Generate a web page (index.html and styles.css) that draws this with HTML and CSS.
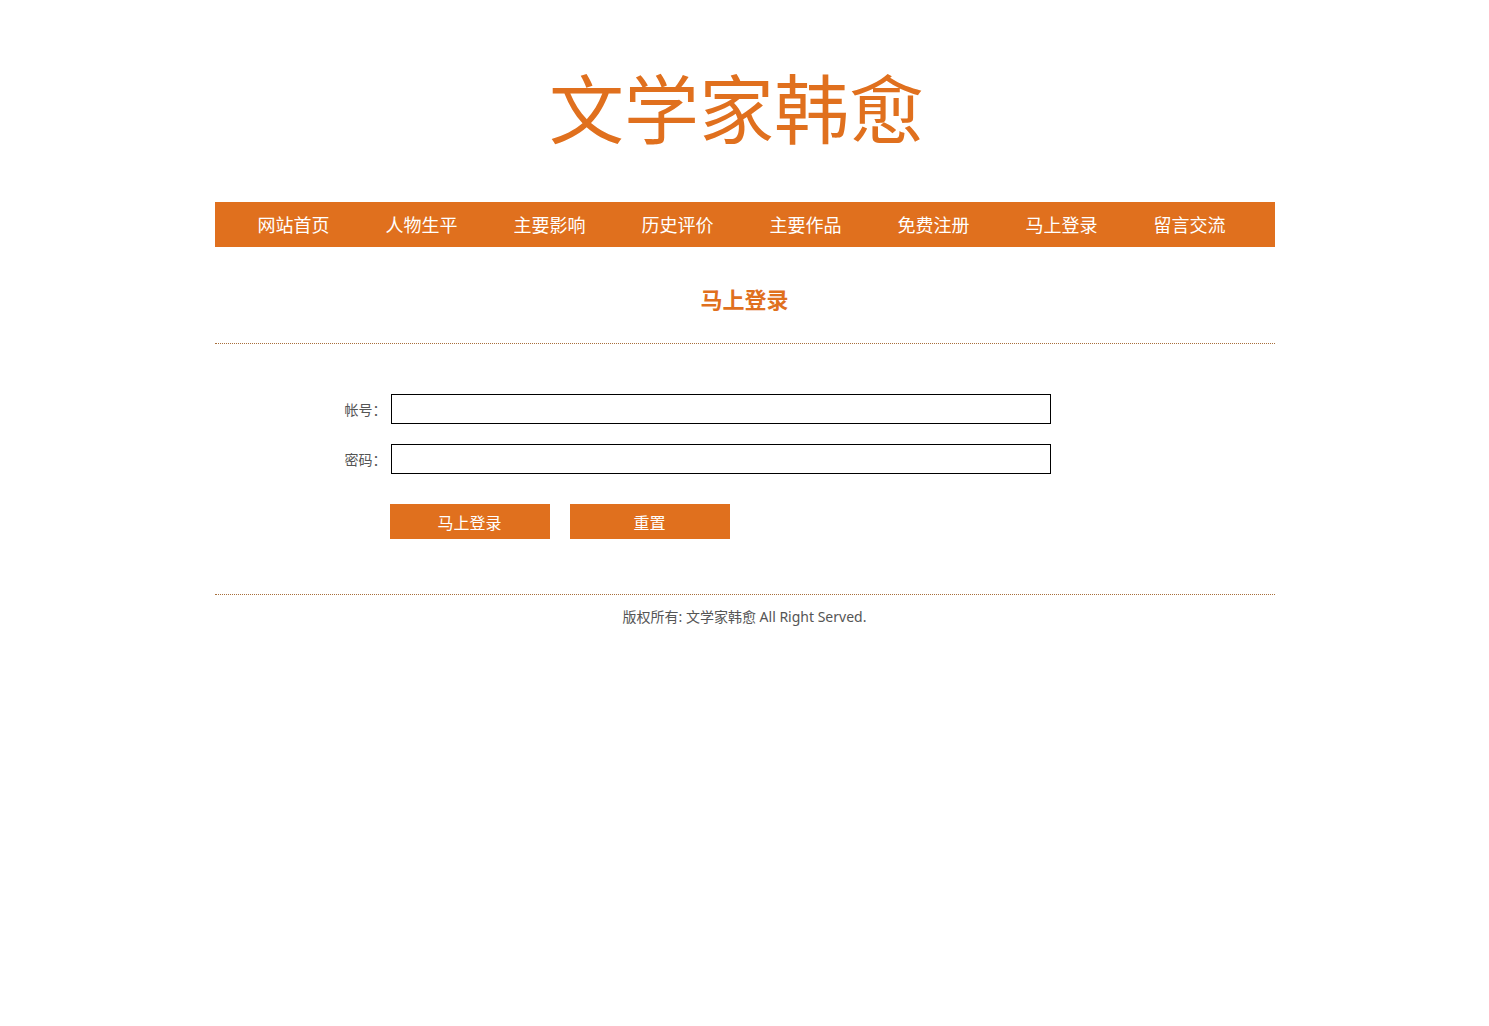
FILE: index.html
```html
<!DOCTYPE html>
<html lang="zh-CN">
<head>
<meta charset="utf-8">
<meta name="viewport" content="width=device-width, initial-scale=1">
<title>马上登录 - 文学家韩愈</title>
<link rel="stylesheet" href="styles.css">
</head>
<body>
<div class="page">
  <header class="banner">
    <p class="logo">文学家韩愈</p>
  </header>
  <nav class="menu">
    <a href="#">网站首页</a>
    <a href="#">人物生平</a>
    <a href="#">主要影响</a>
    <a href="#">历史评价</a>
    <a href="#">主要作品</a>
    <a href="#">免费注册</a>
    <a href="#">马上登录</a>
    <a href="#">留言交流</a>
  </nav>
  <main>
    <h1 class="title">马上登录</h1>
    <form class="login">
      <div class="row">
        <label for="account">帐号：</label>
        <input id="account" type="text">
      </div>
      <div class="row">
        <label for="password">密码：</label>
        <input id="password" type="password">
      </div>
      <div class="actions">
        <button type="submit">马上登录</button>
        <button type="reset">重置</button>
      </div>
    </form>
  </main>
  <footer class="footer">版权所有: 文学家韩愈 All Right Served.</footer>
</div>
</body>
</html>
```
FILE: styles.css
```css
* {
  box-sizing: border-box;
}

body {
  margin: 0;
  background: #fff;
  color: #555;
  font: 14px/20px "Microsoft YaHei", "Noto Sans CJK SC", sans-serif;
}

.page {
  max-width: 1060px;
  margin: 0 auto;
}

.banner {
  padding: 56px 16px 46px 0;
}

.logo {
  margin: 0;
  color: #e0701e;
  font-family: KaiTi, STKaiti, "Noto Sans CJK SC", serif;
  font-size: 75px;
  line-height: 100px;
  text-align: center;
}

.menu {
  display: flex;
  flex-wrap: wrap;
  padding-left: 15px;
  background: #e0701e;
}

.menu a {
  padding: 0 28px;
  color: #fff;
  font-size: 18px;
  line-height: 45px;
  text-decoration: none;
}

.title {
  margin: 0;
  padding: 36px 0 30px;
  border-bottom: 1px dotted #a86f3c;
  color: #e0701e;
  font-size: 22px;
  line-height: 30px;
  text-align: center;
}

.login {
  padding: 50px 224px 55px 130px;
}

.row {
  display: flex;
  align-items: center;
  margin-bottom: 20px;
}

.row label {
  flex: 0 0 46px;
}

.row input {
  flex: 1;
  min-width: 0;
  height: 30px;
  padding: 0 8px;
  border: 1px solid #000;
  border-radius: 0;
  background: #fff;
  font: inherit;
}

.actions {
  display: flex;
  gap: 20px;
  padding: 10px 0 0 45px;
}

.actions button {
  width: 160px;
  height: 35px;
  padding: 0;
  border: 0;
  background: #e0701e;
  color: #fff;
  font-family: inherit;
  font-size: 16px;
}

.footer {
  padding: 12px 0;
  border-top: 1px dotted #a86f3c;
  font-family: "Segoe UI", "Noto Sans", "Noto Sans CJK SC", sans-serif;
  text-align: center;
}
```
